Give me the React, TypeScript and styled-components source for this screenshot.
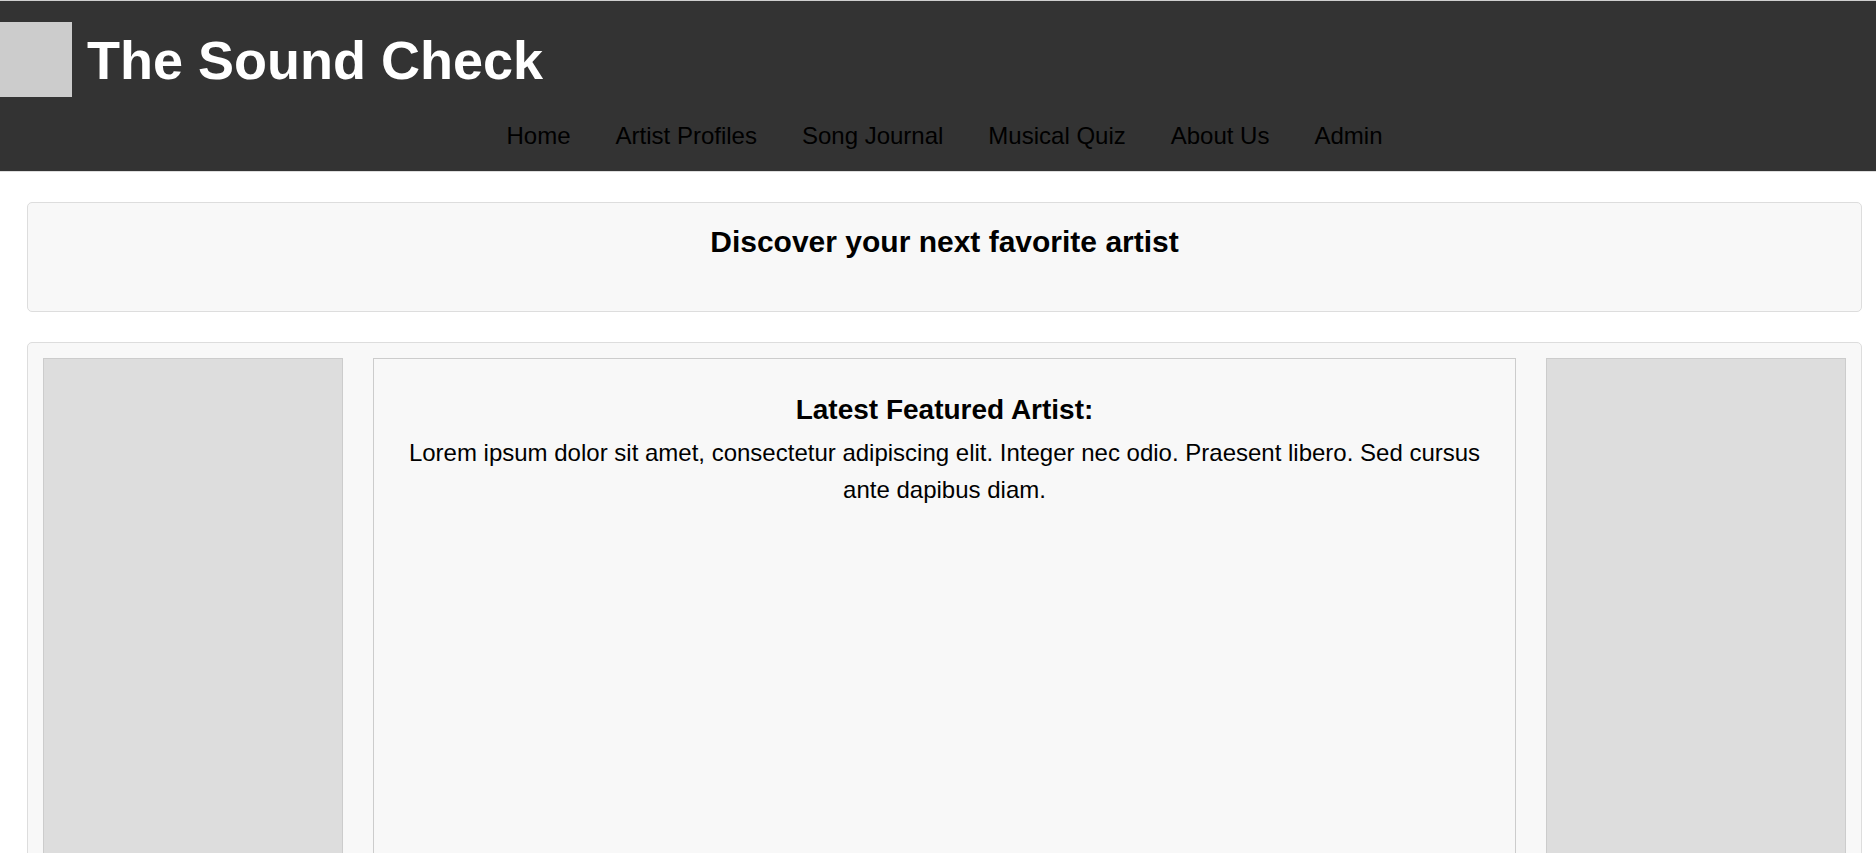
import styled, { createGlobalStyle } from "styled-components";

const navItems = [
  "Home",
  "Artist Profiles",
  "Song Journal",
  "Musical Quiz",
  "About Us",
  "Admin",
];

export default function App() {
  return (
    <>
      <GlobalStyle />
      <Header>
        <Brand>
          <Logo />
          <SiteTitle>The Sound Check</SiteTitle>
        </Brand>
        <Nav>
          {navItems.map((item) => (
            <NavLink key={item} href="#">
              {item}
            </NavLink>
          ))}
        </Nav>
      </Header>
      <Main>
        <Intro>
          <IntroTitle>Discover your next favorite artist</IntroTitle>
        </Intro>
        <Showcase>
          <SidePanel />
          <Featured>
            <FeaturedTitle>Latest Featured Artist:</FeaturedTitle>
            <FeaturedText>
              Lorem ipsum dolor sit amet, consectetur adipiscing elit. Integer
              nec odio. Praesent libero. Sed cursus ante dapibus diam.
            </FeaturedText>
          </Featured>
          <SidePanel />
        </Showcase>
      </Main>
    </>
  );
}

const GlobalStyle = createGlobalStyle`
  * {
    box-sizing: border-box;
  }

  body {
    margin: 0;
    background: #ffffff;
    color: #000000;
    font-family: "Liberation Sans", Arial, sans-serif;
    font-size: 24px;
  }
`;

const Header = styled.header`
  background: #333333;
  border-top: 1px solid #cfcfcf;
  border-bottom: 1px solid #dddddd;
  padding-top: 21px;
`;

const Brand = styled.div`
  display: flex;
  align-items: center;
  gap: 15px;
  height: 75px;
`;

const Logo = styled.div`
  width: 72px;
  height: 75px;
  background: #cccccc;
`;

const SiteTitle = styled.h1`
  margin: 0;
  color: #ffffff;
  font-size: 54px;
  font-weight: bold;
`;

const Nav = styled.nav`
  display: flex;
  justify-content: center;
  gap: 45px;
  padding: 25px 14px 21px 27px;
`;

const NavLink = styled.a`
  color: #000000;
  text-decoration: none;
  font-size: 24px;
  line-height: 27.6px;
`;

const Main = styled.main`
  display: flex;
  flex-direction: column;
  gap: 30px;
  padding: 30px 14px 0 27px;
`;

const Card = styled.section`
  background: #f8f8f8;
  border: 1px solid #dddddd;
  border-radius: 5px;
`;

const Intro = styled(Card)`
  padding: 22px 20px 20px;
  text-align: center;
`;

const IntroTitle = styled.h2`
  margin: 0 0 32px;
  font-size: 30px;
  font-weight: bold;
`;

const Showcase = styled(Card)`
  display: grid;
  grid-template-columns: 300px 1fr 300px;
  gap: 30px;
  padding: 15px;
`;

const SidePanel = styled.aside`
  min-height: 700px;
  background: #dddddd;
  border: 1px solid #cccccc;
`;

const Featured = styled.article`
  background: #f8f8f8;
  border: 1px solid #cccccc;
  padding: 20px;
  text-align: center;
`;

const FeaturedTitle = styled.h3`
  margin: 15px 0 8px;
  font-size: 28px;
  font-weight: bold;
`;

const FeaturedText = styled.p`
  margin: 0;
  font-size: 24px;
  line-height: 37px;
`;
